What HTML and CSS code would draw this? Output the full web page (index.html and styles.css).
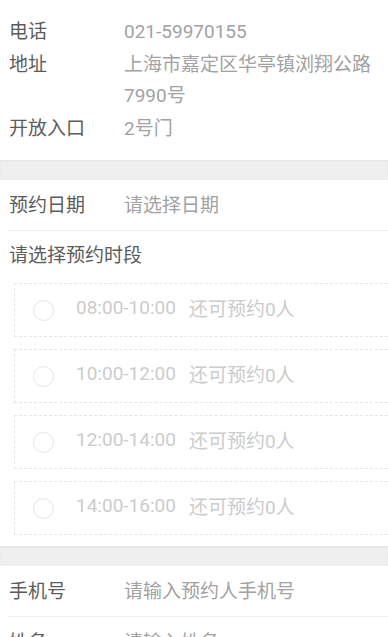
FILE: index.html
```html
<!DOCTYPE html>
<html lang="zh-CN">
<head>
    <meta charset="UTF-8">
    <meta name="viewport" content="width=device-width, initial-scale=1.0">
    <title>预约</title>
    <link rel="stylesheet" href="styles.css">
</head>
<body>
    <div class="info">
        <div class="info-row">
            <span class="label">电话</span>
            <span class="value">021-59970155</span>
        </div>
        <div class="info-row">
            <span class="label">地址</span>
            <span class="value">上海市嘉定区华亭镇浏翔公路7990号</span>
        </div>
        <div class="info-row">
            <span class="label">开放入口</span>
            <span class="value">2号门</span>
        </div>
    </div>

    <div class="band"></div>

    <div class="booking">
        <div class="field">
            <span class="label">预约日期</span>
            <span class="value">请选择日期</span>
        </div>
        <div class="slots-title">请选择预约时段</div>
        <div class="slots">
            <div class="slot">
                <span class="radio"></span>
                <span class="time">08:00-10:00</span>
                <span class="left">还可预约0人</span>
            </div>
            <div class="slot">
                <span class="radio"></span>
                <span class="time">10:00-12:00</span>
                <span class="left">还可预约0人</span>
            </div>
            <div class="slot">
                <span class="radio"></span>
                <span class="time">12:00-14:00</span>
                <span class="left">还可预约0人</span>
            </div>
            <div class="slot">
                <span class="radio"></span>
                <span class="time">14:00-16:00</span>
                <span class="left">还可预约0人</span>
            </div>
        </div>
    </div>

    <div class="band"></div>

    <div class="contact">
        <div class="field">
            <span class="label">手机号</span>
            <span class="value">请输入预约人手机号</span>
        </div>
        <div class="field">
            <span class="label">姓名</span>
            <span class="value">请输入姓名</span>
        </div>
    </div>
</body>
</html>
```

FILE: styles.css
```css
body {
    margin: 0;
    background-color: #ffffff;
    font-family: Roboto, "Noto Sans CJK SC", sans-serif;
    font-size: 19px;
    color: #5c5c5c;
    overflow-x: hidden;
}

.info {
    padding: 15px 0 15px 9px;
}

.info-row {
    display: flex;
    padding: 1px 0;
    line-height: 31px;
}

.label {
    flex: 0 0 115px;
    color: #5c5c5c;
}

.value {
    flex: 1;
    color: #a2a2a2;
}

.band {
    height: 20px;
    background-color: #efefef;
    box-shadow: inset 0 1px 2px rgba(0, 0, 0, 0.05);
}

.field {
    display: flex;
    align-items: center;
    height: 47px;
    margin-left: 8px;
    padding: 0 0 3px 1px;
    border-bottom: 1px solid #eeeeee;
}

.slots-title {
    padding: 9px 0 0 9px;
    line-height: 31px;
}

.slots {
    padding: 12px 0 11px 14px;
}

.slot {
    display: flex;
    align-items: center;
    height: 52px;
    margin-right: -20px;
    margin-bottom: 12px;
    padding-left: 18px;
    border: 1px dashed #e6e6e6;
    color: #cccccc;
}

.slot:last-child {
    margin-bottom: 0;
}

.radio {
    width: 19px;
    height: 19px;
    border: 1px solid #e4e4e4;
    border-radius: 50%;
    margin-right: 22px;
}

.time,
.left {
    margin-bottom: 5px;
}

.time {
    margin-right: 13px;
}
```
